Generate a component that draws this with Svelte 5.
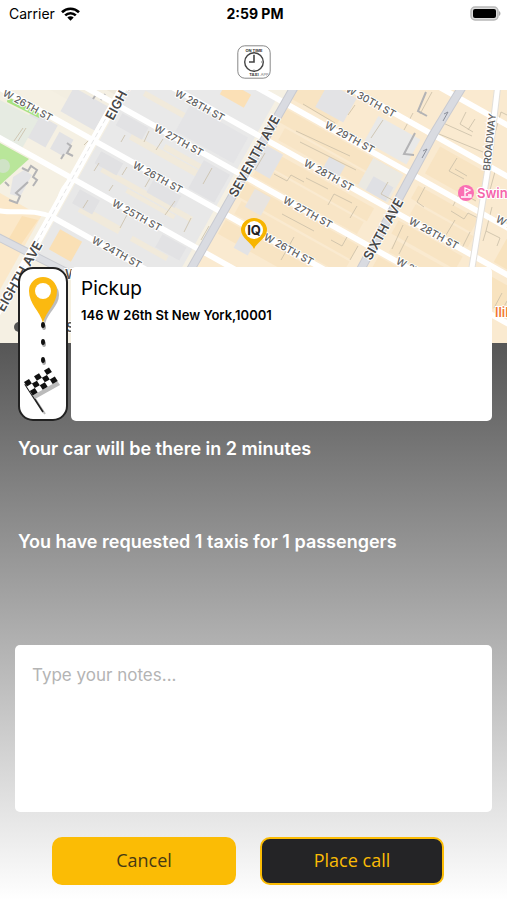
<script>
  let notes = $state('');

  const trip = {
    address: '146 W 26th St New York,10001',
    minutes: 2,
    taxis: 1,
    passengers: 1
  };

  // offset of every cross street along the avenues, 26th street is 0
  const streets = [-188, -149, -110, -74, -37, 0, 38];

  // u runs along the streets, v along the avenues: [u, v, width, height, fill]
  const blocks = [
    [98, -110, 117, 108, '#e9e9e9'],
    [98, 0, 117, 112, '#e8e8e8'],
    [-40, -40, 130, 20, '#f3eee1'],
    [56, -32, 34, 24, '#e3e3e5'],
    [60, -66, 30, 22, '#eee8da'],
    [112, -60, 70, 5, '#f1eadb'],
    [120, -22, 78, 6, '#f1eadb'],
    [150, -28, 40, 5, '#f1eadb'],
    [112, 16, 90, 5, '#f1eadb'],
    [140, 22, 48, 4, '#f1eadb'],
    [112, 54, 40, 7, '#f1eadb'],
    [164, 56, 36, 5, '#f1eadb'],
    [106, 82, 22, 20, '#fae0b5'],
    [170, -102, 24, 13, '#fbe0b6'],
    [152, -68, 58, 26, '#e4e4e6'],
    [104, -33, 26, 12, '#e2e2e4'],
    [186, -32, 26, 28, '#e2e2e4'],
    [104, 5, 22, 12, '#e1e1e3'],
    [156, 5, 28, 12, '#e2e2e4'],
    [104, 43, 20, 14, '#e1e1e3'],
    [186, 42, 24, 13, '#e2e2e4'],
    [34, 4, 26, 22, '#e2e2e4'],
    [64, 8, 14, 17, '#e2e2e4'],
    [226, -143, 46, 27, '#f8e4c3'],
    [226, -106, 112, 13, '#f8e4c3'],
    [234, -91, 100, 12, '#f8e5c6'],
    [228, -68, 108, 13, '#f8e4c3'],
    [230, -53, 104, 12, '#f8e5c6'],
    [228, -33, 112, 14, '#f8e4c3'],
    [232, -17, 108, 13, '#f8e5c6'],
    [228, 4, 112, 14, '#f8e4c3'],
    [248, -144, 28, 24, '#e3e3e5'],
    [300, -140, 42, 25, '#e9e9e8'],
    [314, -106, 30, 28, '#ebe9e2'],
    [226, -70, 18, 24, '#e3e3e5'],
    [280, -88, 16, 11, '#e1e2e5'],
    [322, -92, 20, 14, '#dfe0e4'],
    [237, -32, 16, 18, '#e8e4e0'],
    [246, 8, 14, 14, '#e3e3e5'],
    [360, -143, 50, 27, '#f8e4c3'],
    [360, -104, 60, 13, '#f8e4c3'],
    [366, -89, 58, 11, '#f8e5c6'],
    [360, -69, 64, 13, '#f8e4c3'],
    [366, -53, 60, 12, '#f8e5c6'],
    [360, -33, 64, 14, '#f8e4c3'],
    [450, -144, 30, 26, '#f8e3bf'],
    [450, -104, 40, 26, '#f8e3bf'],
    [450, -66, 44, 24, '#f8e3bf']
  ];

  const edges = [
    'M84 145l13-13M78 162l6-10M121 142l4-7M144 142l5-11M156 150l7-11M94 171l5-8M122 175l5-8M145 187l8-14M203 184l9-16',
    'M109 191l4-6M83 208l5-8M165 215l10-14M184 232l7-14M201 240l8-14M120 228l9-17M14 141l9-13M18 141l8-13',
    'M296 131l54 25M300 142l56 28M348 115l7-10M371 138l12-18M306 178l22 11M350 218l7-12M265 153l-10 17M303 104l32 19',
    'M274 174l13 7 4-6 13 7M328 205l6-11 18 9M282 214l32 17M347 237l-5 9-11-6M350 260l8-14M281 260l13-23M388 182l-7 12 17 9',
    'M432 92l-12 22M404 130l9-17M466 112l-6 12 13 8M475 119l-7 11M451 108l-8 15 29 13',
    'M439 134l44 18M457 158l-8 13 15 8M467 176l-12-7M453 206l7-14 16 9M451 211l13 8 4-6 10 5M424 207l-7-5 8-15M392 249l11-24M399 254l9-18',
    'M455 220l-12 20M462 248l8-16M492 207l-6 24M493 140l8-28 6 3M490 190l6-22M483 241l3-10 14 7-3 8M494 308l8-15M500 314l7-13'
  ];

  const labels = [
    ['W 26TH ST', 28, 105, 29],
    ['W 28TH ST', 200, 105, 29],
    ['W 27TH ST', 179, 140, 29],
    ['W 26TH ST', 158, 177, 29],
    ['W 25TH ST', 137, 215, 29],
    ['W 24TH ST', 117, 252, 29],
    ['W 30TH ST', 371, 101, 29],
    ['W 29TH ST', 350, 137, 29],
    ['W 28TH ST', 329, 175, 29],
    ['W 27TH ST', 308, 212, 29],
    ['W 26TH ST', 289, 249, 29],
    ['W 28TH ST', 434, 233, 29],
    ['W 27TH ST', 421, 273, 29],
    ['W 29TH ST', 521, 231, 29],
    ['BROADWAY', 489, 142, -84]
  ];

  const avenues = [
    ['EIGHTH AVE', 127, 84, -62],
    ['SEVENTH AVE', 254, 156, -61],
    ['SIXTH AVE', 383, 229, -61],
    ['EIGHTH AVE', 19, 276, -60]
  ];

  // dark squares of the finish flag: column, row
  const checks = [];
  for (let r = 0; r < 3; r++) {
    for (let c = 0; c < 5; c++) {
      if ((r + c) % 2 === 0) checks.push([c, r]);
    }
  }
</script>

<main class="screen">
  <header>
    <div class="status">
      <span class="carrier">
        Carrier
        <svg width="19" height="14" viewBox="0 0 19 14" aria-hidden="true">
          <g fill="none" stroke="#000" stroke-width="2.6">
            <path d="M1 5.2C5.7.6 13.3.6 18 5.2" />
            <path d="M4.2 8.4c3-2.9 7.6-2.9 10.6 0" />
          </g>
          <path d="M6.3 10.5c1.8-1.7 4.6-1.7 6.4 0L9.5 13.7z" />
        </svg>
      </span>
      <span class="time">2:59 PM</span>
      <span class="battery">
        <svg width="31" height="15" viewBox="0 0 31 15" aria-hidden="true">
          <rect x="1" y="1" width="27" height="13" rx="4" fill="#ddd" stroke="#b8b8b8" stroke-width="1.5" />
          <rect x="3" y="3" width="23" height="9" rx="2" />
          <path d="M29 5c2 1 2 4 0 5z" fill="#aaa" />
        </svg>
      </span>
    </div>
    <div class="brand">
      <svg width="34" height="34" viewBox="0 0 34 34" role="img" aria-label="On time taxi">
        <rect x=".8" y=".8" width="32.4" height="32.4" rx="7" fill="#fff" stroke="#888" />
        <circle cx="17" cy="17" r="9.3" fill="none" stroke="#444" stroke-width="1.4" />
        <path d="M17 10v7h-5" fill="none" stroke="#444" stroke-width="1.6" />
        <path d="M17 8.5v1M25 17h-1M17 25.5v-1" stroke="#777" />
        <text x="17" y="6.8" class="tiny">ON TIME</text>
        <text x="17" y="30.5" class="tiny">TAXI</text>
        <text x="27" y="30.5" class="tiny light">.APP</text>
      </svg>
    </div>
  </header>

  <div class="map">
    <svg viewBox="0 90 507 253" preserveAspectRatio="xMidYMin slice" role="img" aria-label="Map of the pickup location">
      <rect y="90" width="507" height="253" fill="#f5f0e3" />
      <g transform="matrix(1 .56 -.56 1 0 88)">
        <rect x="221" y="-260" width="400" height="560" fill="#faead0" />
        <rect x="-60" y="80" width="146" height="180" fill="#fbe8c9" />
        {#each blocks as [u, v, w, h, fill]}
          <rect x={u} y={v} width={w} height={h} {fill} />
        {/each}
      </g>
      <path d="M0 100l38 20-18 32-20-12z" fill="#e6ebe2" />
      <path d="M8 97l32 16-1 5L7 102z" fill="#a9e27f" />
      <path d="M0 143l29 16L0 185z" fill="#b9e69a" />
      <circle cx="3" cy="166" r="7" fill="#cfe3c6" />
      <path d="M13 177l11-7 8 5-12 22-10-3z" fill="#e4e4e6" />
      <path d="M22 216l16 4-18 26-12-6z" fill="#fae0b5" />
      {#each edges as d}
        <path {d} fill="none" stroke="#c9bea7" stroke-width="1" opacity=".8" />
      {/each}
      <!-- tower footprints -->
      <g fill="none" stroke="#b3b3b5" stroke-width="2">
        <path d="M93 99l4-6M101 100l4-6M67 143l4 3-4 7 6 3M61 159l3-5" />
        <path d="M22 168l6 3 3-5 6 4-4 7 4 3-4 6M28 182l-12 11 4 3-3 7-8-3M5 182l4 4" />
        <path d="M415 133l-11 21 10 1M426 92l-8 19 9 5" />
      </g>

      <g transform="matrix(1 .56 -.56 1 0 88)" fill="none" stroke="#fff" stroke-width="5">
        {#each streets as v}
          <path d="M-140 {v}H640" />
        {/each}
        <path d="M96 76H640" />
      </g>
      <path d="M-4 210c18 5 34-3 59 8" fill="none" stroke="#fff" stroke-width="5" />
      <path d="M72 178q-14 12-14 28" fill="none" stroke="#fff" stroke-width="3" />
      <path d="M-4 236L90 284" stroke="#c9cbd1" stroke-width="8" />
      <path d="M-4 236L90 284" stroke="#dcdee3" stroke-width="6" />
      <path d="M125 84L20 272-30 360" fill="none" stroke="#fff" stroke-width="8" />
      <path d="M125 84L20 272" fill="none" stroke="#e6e6e6" stroke-width="1" stroke-dasharray="5 3" />
      <g fill="none">
        <path d="M296 84L187 276M464 84L433 135 355 280" stroke="#c8cad1" stroke-width="9" />
        <path d="M296 84L187 276M464 84L433 135 355 280" stroke="#d9dbe1" stroke-width="7" />
        <path d="M498 84L488 168 470 280" stroke="#e2dfda" stroke-width="7" />
        <path d="M498 84L488 168 470 280" stroke="#fff" stroke-width="5" />
      </g>
      <path d="M422 158l5-9-4 2M443 121l5-9-4 2" fill="none" stroke="#8b8f9a" />

      {#each labels as [name, x, y, angle]}
        <text class="street" dy="4" transform="translate({x} {y}) rotate({angle})">{name}</text>
      {/each}
      {#each avenues as [name, x, y, angle]}
        <text class="avenue" dy="5" transform="translate({x} {y}) rotate({angle})">{name}</text>
      {/each}

      <circle cx="466" cy="193" r="8" fill="#fa6fb4" />
      <path d="M465 196v-8l5 2-5 3M461 197h10v-2h-3" fill="none" stroke="#fff" stroke-width="1.3" />
      <text x="477" y="198" class="poi pink">Swingers</text>
      <text x="495" y="317" class="poi orange">llili</text>
      <circle cx="19" cy="327" r="5" fill="#555" />
      <text x="66" y="332" class="poi dark">S</text>
      <text x="65" y="279" class="poi dark">W</text>

      <path d="M254 249c-2-6-13-11-13-19a13 12 0 0 1 26 0c0 8-11 13-13 19z" fill="#f7b500" />
      <circle cx="254" cy="230" r="9" fill="#fff" />
      <text x="254" y="235" class="pin">IQ</text>
    </svg>
  </div>

  <section class="sheet">
    <div class="trip">
      <div class="route">
        <svg width="40" height="146" viewBox="0 0 40 146" aria-hidden="true">
          <path d="M22 51C19 39 8 33 8 22a14 14 0 0 1 28 0c0 11-11 17-14 29z" fill="#bdbdbd" />
          <path d="M20 50C17 38 6 31 6 18a14 14 0 0 1 28 0c0 13-11 20-14 32z" fill="#fbb910" />
          <circle cx="20" cy="18" r="8" fill="#fff" />
          <g fill="#aaa">
            <ellipse cx="21" cy="54" rx="2" ry="3" />
            <ellipse cx="21" cy="71" rx="2" ry="3" />
            <ellipse cx="21" cy="89" rx="2" ry="3" />
          </g>
          <g fill="#111">
            <ellipse cx="20" cy="52" rx="2" ry="3" />
            <ellipse cx="20" cy="69" rx="2" ry="3" />
            <ellipse cx="20" cy="87" rx="2" ry="3" />
          </g>
          <path d="M3 112l19 29" stroke="#bbb" stroke-width="2" />
          <path d="M2 111l18 28" stroke="#222" stroke-width="1.6" />
          <path d="M3 112l25-14 9 14-25 14z" fill="#bbb" />
          <g transform="matrix(5 -2.900 2.900 4.500 1 109)">
            <rect width="5" height="3" fill="#fff" />
            {#each checks as [c, r]}
              <rect x={c} y={r} width="1" height="1" fill="#111" />
            {/each}
          </g>
        </svg>
      </div>
      <div class="pickup">
        <h1>Pickup</h1>
        <p>{trip.address}</p>
      </div>
    </div>

    <p class="info">Your car will be there in {trip.minutes} minutes</p>
    <p class="info">You have requested {trip.taxis} taxis for {trip.passengers} passengers</p>

    <textarea bind:value={notes} placeholder="Type your notes..." aria-label="Notes"></textarea>

    <div class="actions">
      <button type="button" class="cancel">Cancel</button>
      <button type="button" class="call">Place call</button>
    </div>
  </section>
</main>

<style>
  :global(body) {
    margin: 0;
    background: #fff;
  }

  .screen {
    display: flex;
    flex-direction: column;
    min-height: 100vh;
    font-family: Inter, 'Liberation Sans', sans-serif;
    color: #000;
  }

  header {
    height: 90px;
    background: #fff;
  }

  .status {
    display: grid;
    grid-template-columns: 1fr auto 1fr;
    align-items: center;
    height: 27px;
    padding: 0 6px 0 9px;
    font-size: 14px;
  }

  .carrier {
    display: flex;
    align-items: center;
    gap: 6px;
  }

  .time {
    font-weight: 700;
  }

  .battery {
    display: flex;
    justify-content: flex-end;
  }

  .brand {
    display: flex;
    justify-content: center;
    padding-top: 18px;
  }

  .tiny {
    font-size: 4px;
    font-weight: 700;
    text-anchor: middle;
    fill: #333;
  }

  .light {
    font-weight: 400;
    fill: #777;
  }

  .map {
    height: 253px;
    overflow: hidden;
  }

  .map svg {
    display: block;
    width: 100%;
    height: 100%;
  }

  .street,
  .avenue {
    text-anchor: middle;
    paint-order: stroke;
    stroke: #fff;
    stroke-width: 2px;
  }

  .street {
    font-size: 10px;
    font-weight: 500;
    fill: #606060;
  }

  .avenue {
    font-size: 13px;
    font-weight: 600;
    fill: #484848;
  }

  .poi {
    font-size: 13px;
    font-weight: 600;
    paint-order: stroke;
    stroke: #fff;
    stroke-width: 2px;
  }

  .pink {
    fill: #f564aa;
  }

  .orange {
    fill: #f27a32;
  }

  .dark {
    fill: #555;
  }

  .pin {
    font-size: 13px;
    font-weight: 700;
    text-anchor: middle;
    fill: #222;
  }

  .sheet {
    flex: 1;
    display: flex;
    flex-direction: column;
    padding: 0 15px 15px;
    background: linear-gradient(#565656, #fff);
  }

  .trip {
    position: relative;
    display: flex;
    gap: 3px;
    height: 154px;
    margin: -76px 0 14px 3px;
  }

  .route {
    box-sizing: border-box;
    display: flex;
    justify-content: center;
    width: 50px;
    padding-top: 4px;
    border: 2px solid #222;
    border-radius: 15px;
    background: #fff;
  }

  .pickup {
    flex: 1;
    padding: 10px;
    border-radius: 5px;
    background: #fff;
  }

  h1 {
    margin: 0 0 7px;
    font-size: 19px;
    font-weight: 400;
    line-height: 24px;
  }

  .pickup p {
    margin: 0;
    font-size: 13px;
    font-weight: 600;
    line-height: 14px;
  }

  .info {
    margin: 0 0 65px 3px;
    font-size: 18px;
    font-weight: 600;
    line-height: 28px;
    color: #fff;
  }

  textarea {
    box-sizing: border-box;
    flex: 1;
    min-height: 167px;
    margin-top: 24px;
    padding: 18px 17px;
    border: 0;
    border-radius: 5px;
    background: #fff;
    font: 17px/24px Inter, 'Liberation Sans', sans-serif;
    resize: none;
  }

  textarea::placeholder {
    color: #b4b4b4;
  }

  .actions {
    display: flex;
    gap: 24px;
    padding: 25px 48px 0 37px;
  }

  button {
    flex: 1;
    height: 48px;
    padding: 0 0 2px;
    border: 2px solid #fbbc05;
    border-radius: 10px;
    font: 18px 'Open Sans', 'Noto Sans', sans-serif;
  }

  .cancel {
    background: #fbbc05;
    color: #463914;
  }

  .call {
    background: #242426;
    color: #fbbc05;
  }
</style>
